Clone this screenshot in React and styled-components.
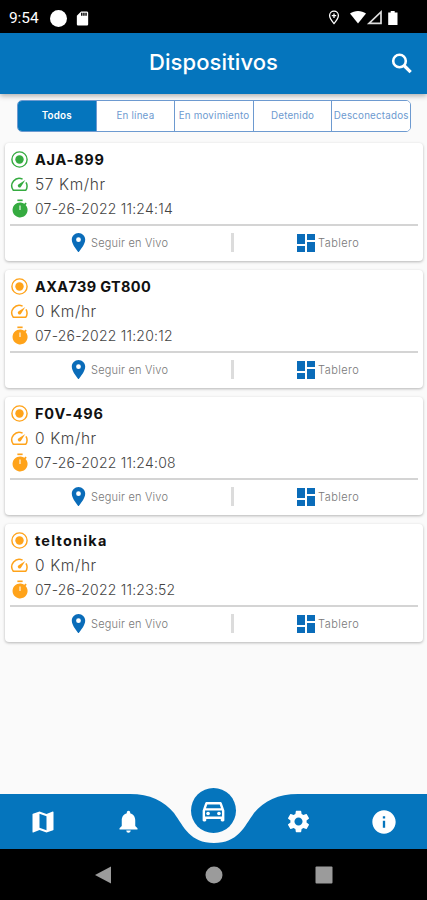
import React, { useState } from "react";
import styled, { createGlobalStyle } from "styled-components";
import {
  MdDashboard,
  MdLocationOn,
  MdMap,
  MdNotifications,
  MdSettings,
  MdInfo,
  MdOutlineDirectionsCar,
  MdSdCard,
} from "react-icons/md";

const BLUE = "#0575bd";

const GlobalStyle = createGlobalStyle`
  * {
    box-sizing: border-box;
  }

  body {
    margin: 0;
    background: #fafafa;
    font-family: Inter, "Open Sans", sans-serif;
  }

  button {
    font-family: inherit;
    border: none;
    background: none;
    padding: 0;
    cursor: pointer;
  }

  svg {
    display: block;
    flex-shrink: 0;
  }
`;

const Screen = styled.div`
  display: flex;
  flex-direction: column;
  width: 427px;
  height: 900px;
  overflow: hidden;
  background: #fafafa;
`;

// Android status bar
const StatusBar = styled.div`
  display: flex;
  align-items: center;
  height: 33px;
  padding: 3px 28px 0 9px;
  background: #000;
  color: #fff;
`;

const Clock = styled.span`
  width: 41px;
  font-family: Roboto, sans-serif;
  font-size: 15.5px;
  letter-spacing: -0.1px;
`;

const Dot = styled.span`
  width: 17px;
  height: 17px;
  margin-right: 7px;
  border-radius: 50%;
  background: #fff;
`;

const StatusIcons = styled.div`
  display: flex;
  align-items: center;
  margin-left: auto;
`;

// Header
const Header = styled.header`
  display: grid;
  grid-template-columns: 50px 1fr 50px;
  align-items: center;
  flex-shrink: 0;
  height: 61px;
  background: ${BLUE};
  color: #fff;
  box-shadow: 0 2px 5px rgba(0, 0, 0, 0.3);
`;

const Title = styled.h1`
  grid-column: 2;
  margin: 0;
  padding-bottom: 3px;
  text-align: center;
  font-size: 22px;
  font-weight: 500;
  letter-spacing: 0.1px;
`;

const SearchButton = styled.button`
  display: flex;
  justify-content: center;
  color: #fff;
`;

// Tabs
const Tabs = styled.div`
  display: flex;
  flex-shrink: 0;
  width: 394px;
  height: 32px;
  margin: 6px 0 11px 17px;
  border: 1px solid #6d9ad0;
  border-radius: 5px;
  overflow: hidden;
  background: #fff;
`;

const Tab = styled.button`
  flex: 1 1 0;
  display: flex;
  align-items: center;
  justify-content: center;
  min-width: 0;
  padding-bottom: 2px;
  white-space: nowrap;
  font-size: 9.8px;
  letter-spacing: 0.2px;
  font-weight: ${(props) => (props.$active ? 600 : 400)};
  color: ${(props) => (props.$active ? "#fff" : "#6d9ad0")};
  background: ${(props) => (props.$active ? BLUE : "#fff")};

  & + & {
    border-left: 1px solid #6d9ad0;
  }
`;

// Device list
const List = styled.main`
  display: flex;
  flex-direction: column;
  flex: 1;
  gap: 9px;
  padding: 0 4px 0 5px;
`;

const Card = styled.article`
  height: 118px;
  padding: 4px 5px 0;
  border-radius: 4px;
  background: #fff;
  box-shadow: 0 1px 3px rgba(0, 0, 0, 0.28);
`;

const Info = styled.div`
  display: grid;
  grid-template-rows: 25px 24px 24px;
  height: 79px;
  border-bottom: 2px solid #d4d4d4;
`;

const InfoRow = styled.div`
  display: flex;
  align-items: center;
  gap: 6px;
  color: ${(props) => props.$color};
`;

const IconBox = styled.span`
  display: flex;
  justify-content: center;
  width: 19px;
`;

const DeviceName = styled.strong`
  font-size: 14.5px;
  font-weight: 700;
  letter-spacing: ${(props) => props.$spacing}px;
  color: #111;
`;

const Value = styled.span`
  font-size: ${(props) => props.$size}px;
  font-weight: 300;
  letter-spacing: ${(props) => props.$spacing}px;
  color: #444;
`;

const Actions = styled.div`
  display: grid;
  grid-template-columns: 221px 3px 1fr;
  align-items: center;
  height: 33px;
`;

const Action = styled.button`
  display: flex;
  align-items: center;
  gap: ${(props) => props.$gap}px;
  padding-left: ${(props) => props.$offset}px;
  font-size: 11px;
  font-weight: 300;
  letter-spacing: ${(props) => props.$spacing}px;
  color: #777;

  svg {
    color: #0a6cb9;
  }
`;

const Separator = styled.span`
  height: 19px;
  background: #dcdcdc;
`;

// Bottom navigation
const BottomNav = styled.nav`
  position: relative;
  flex-shrink: 0;
  height: 55px;
`;

const NavShape = styled.svg`
  position: absolute;
  inset: 0;
`;

const NavItems = styled.div`
  position: relative;
  display: grid;
  grid-template-columns: repeat(5, 1fr);
  height: 55px;
`;

const NavButton = styled.button`
  display: flex;
  align-items: flex-start;
  justify-content: center;
  padding-top: ${(props) => props.$top || 14}px;
  color: #fff;
`;

const ActiveCircle = styled.span`
  display: flex;
  align-items: center;
  justify-content: center;
  flex-shrink: 0;
  width: 45px;
  height: 45px;
  margin-top: -7px;
  border-radius: 50%;
  background: ${BLUE};
`;

const SystemNav = styled.div`
  display: flex;
  align-items: center;
  justify-content: space-between;
  flex-shrink: 0;
  height: 51px;
  padding: 0 94px;
  background: #000;
`;

const SearchIcon = () => (
  <svg width="26" height="26" viewBox="0 0 26 26" fill="none" stroke="currentColor">
    <circle cx="10.500" cy="10" r="6.300" strokeWidth="2.600" />
    <path d="M15 14.500L21.700 21.200" strokeWidth="3.200" />
  </svg>
);

const StatusIcon = () => (
  <svg width="19" height="19" viewBox="0 0 19 19" fill="currentColor">
    <circle cx="9.5" cy="9.5" r="7.6" fill="none" stroke="currentColor" strokeWidth="1.4" />
    <circle cx="9.5" cy="9.5" r="4.2" />
  </svg>
);

const GaugeIcon = () => (
  <svg width="19" height="19" viewBox="0 0 19 19" fill="none" stroke="currentColor">
    <path d="M12.600 4.100A7.500 7.500 0 0 0 3.300 15.300H15.700A7.500 7.500 0 0 0 16 7.400" strokeWidth="1.500" strokeLinejoin="round" />
    <path d="M15.300 5L10.800 11.900A1.700 1.700 0 0 1 8.300 9.500Z" fill="currentColor" stroke="none" />
  </svg>
);

const TimerIcon = () => (
  <svg width="18" height="19" viewBox="0 0 24 25" fill="currentColor">
    <path d="M8.500 0.500h7v2.200h-7z" />
    <path
      fillRule="evenodd"
      d="M19.500 7.700L21 6.200l-1.600-1.600-1.600 1.600A10 10 0 1 0 19.500 7.700zM12.700 14.500h-1.400V8.500h1.400z"
    />
  </svg>
);

const tabs = ["Todos", "En línea", "En movimiento", "Detenido", "Desconectados"];

const devices = [
  { name: "AJA-899", speed: 57, date: "07-26-2022 11:24:14", moving: true, spacing: 0.75 },
  { name: "AXA739 GT800", speed: 0, date: "07-26-2022 11:20:12", spacing: 0.35 },
  { name: "F0V-496", speed: 0, date: "07-26-2022 11:24:08", spacing: 0.75 },
  { name: "teltonika", speed: 0, date: "07-26-2022 11:23:52", spacing: 1.2 },
];

const DeviceCard = ({ device }) => {
  const color = device.moving ? "#35ab40" : "#ffa31a";

  return (
    <Card>
      <Info>
        <InfoRow $color={color}>
          <IconBox>
            <StatusIcon />
          </IconBox>
          <DeviceName $spacing={device.spacing}>{device.name}</DeviceName>
        </InfoRow>
        <InfoRow $color={color}>
          <IconBox>
            <GaugeIcon />
          </IconBox>
          <Value $size={15.5} $spacing={0.6}>{device.speed} Km/hr</Value>
        </InfoRow>
        <InfoRow $color={color}>
          <IconBox>
            <TimerIcon />
          </IconBox>
          <Value $size={14} $spacing={0.22}>{device.date}</Value>
        </InfoRow>
      </Info>
      <Actions>
        <Action $offset={57} $gap={1} $spacing={0.2}>
          <MdLocationOn size={23} />
          Seguir en Vivo
        </Action>
        <Separator />
        <Action $offset={60} $gap={0} $spacing={0.45}>
          <MdDashboard size={24} />
          Tablero
        </Action>
      </Actions>
    </Card>
  );
};

const App = () => {
  const [activeTab, setActiveTab] = useState("Todos");

  return (
    <>
      <GlobalStyle />
      <Screen>
        <StatusBar>
          <Clock>9:54</Clock>
          <Dot />
          <MdSdCard size={17} />
          <StatusIcons>
            {/* location, wifi, signal, battery */}
            <svg width="71" height="18" viewBox="0 0 71 18" fill="#fff">
              <path d="M6 2.200a4.400 4.400 0 0 1 4.400 4.400c0 3-4.400 8-4.400 8S1.600 9.600 1.600 6.600A4.400 4.400 0 0 1 6 2.200z" fill="none" stroke="#fff" strokeWidth="1.300" />
              <path d="M6 4.500v4.400M3.800 6.700h4.400" stroke="#fff" strokeWidth="1.300" />
              <path d="M22 4.500c4.500-3.500 11.500-3.500 16 0l-8 10z" />
              <path d="M53 3v11.300H41z" fill="none" stroke="#ddd" strokeWidth="1.700" />
              <path d="M62.700 2h4v1.500h2.800V16h-9.300V3.500h2.500z" />
            </svg>
          </StatusIcons>
        </StatusBar>
        <Header>
          <Title>Dispositivos</Title>
          <SearchButton aria-label="Buscar">
            <SearchIcon />
          </SearchButton>
        </Header>
        <Tabs>
          {tabs.map((tab) => (
            <Tab key={tab} $active={tab === activeTab} onClick={() => setActiveTab(tab)}>
              {tab}
            </Tab>
          ))}
        </Tabs>
        <List>
          {devices.map((device) => (
            <DeviceCard key={device.name} device={device} />
          ))}
        </List>
        <BottomNav>
          <NavShape width="427" height="55" viewBox="0 0 427 55">
            <path
              d="M0 0H130C150 0 164 7 174 19C184 33 190 49 214 49C238 49 244 33 254 19C264 7 278 0 298 0H427V55H0Z"
              fill={BLUE}
            />
          </NavShape>
          <NavItems>
            <NavButton aria-label="Mapa">
              <MdMap size={28} />
            </NavButton>
            <NavButton aria-label="Alertas">
              <MdNotifications size={27} />
            </NavButton>
            <NavButton aria-label="Dispositivos" $top={0.5}>
              <ActiveCircle>
                <MdOutlineDirectionsCar size={29} />
              </ActiveCircle>
            </NavButton>
            <NavButton aria-label="Ajustes">
              <MdSettings size={27} />
            </NavButton>
            <NavButton aria-label="Información">
              <MdInfo size={28} />
            </NavButton>
          </NavItems>
        </BottomNav>
        <SystemNav>
          <svg width="18" height="18" viewBox="0 0 18 18" fill="#9b9b9b">
            <path d="M1 9L17 0.500V17.500Z" />
          </svg>
          <svg width="18" height="18" viewBox="0 0 18 18" fill="#9b9b9b">
            <circle cx="9" cy="9" r="8.500" />
          </svg>
          <svg width="18" height="18" viewBox="0 0 18 18" fill="#9b9b9b">
            <rect x="0.500" y="0.500" width="17" height="17" rx="1" />
          </svg>
        </SystemNav>
      </Screen>
    </>
  );
};

export default App;
